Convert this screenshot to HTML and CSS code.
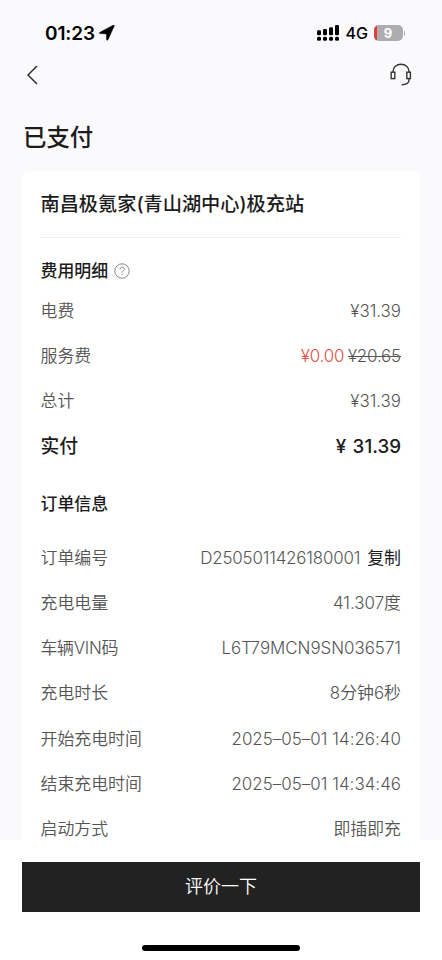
FILE: index.html
```html
<!DOCTYPE html>
<html lang="zh-CN">
<head>
<meta charset="utf-8">
<meta name="viewport" content="width=device-width, initial-scale=1">
<title>已支付</title>
<link rel="stylesheet" href="styles.css">
</head>
<body>
<div class="screen">
  <header class="status">
    <span class="clock">01:23</span>
    <svg class="location" width="16" height="16" viewBox="0 0 16 16"><path d="M15.2 1.1 8.9 14.9c-.3.6-1.3.5-1.3-.3L7.4 8.9 1.2 8.6c-.9 0-1-1-.2-1.4L14.2.2c.7-.3 1.3.2 1 .9Z" stroke="#000" stroke-width=".5"/></svg>
    <svg class="signal" width="23" height="16" viewBox="0 0 23 16">
      <rect x="0" y="5.2" width="4" height="5" rx="1.3"/><rect x="6" y="4" width="4" height="6.2" rx="1.3"/><rect x="12" y="2.2" width="4" height="8" rx="1.3"/><rect x="18" y="0" width="4" height="10.2" rx="1.3"/>
      <rect x="0" y="11.7" width="4" height="4" rx="1.5"/><rect x="6" y="11.7" width="4" height="4" rx="1.5"/><rect x="12" y="11.7" width="4" height="4" rx="1.5"/><rect x="18" y="11.7" width="4" height="4" rx="1.5"/>
    </svg>
    <span class="network">4G</span>
    <span class="battery"><span class="level">9</span></span><span class="battery-tip"></span>
  </header>
  <nav class="nav">
    <svg width="12" height="20" viewBox="0 0 12 20" fill="none" stroke="#222" stroke-width="1.4"><path d="M10 1 1 10l9 9"/></svg>
    <svg width="22" height="24" viewBox="0 0 22 24" fill="none" stroke="#333" stroke-width="1.4"><path d="M3 9V8.5a8 7.3 0 0 1 16 0V9M19 16v.8c0 3-2.8 5-7.3 5"/><rect x="1.2" y="9.2" width="3.6" height="6.4"/><rect x="16.8" y="9.2" width="3.6" height="6.4"/></svg>
  </nav>
  <h1 class="title">已支付</h1>
  <main class="card">
    <h2 class="station">南昌极氪家(青山湖中心)极充站</h2>
    <h3 class="section fees">费用明细<svg width="16" height="16" viewBox="0 0 16 16" fill="none" stroke="#888" stroke-width="1"><circle cx="8" cy="8" r="7.2"/><path d="M5.9 6.5c0-3.2 4.4-2.9 4.4-.3 0 1.7-2.2 1.7-2.2 3.6M8.1 11v1.2"/></svg></h3>
    <dl class="rows">
      <div class="row"><dt>电费</dt><dd class="price">¥31.39</dd></div>
      <div class="row"><dt>服务费</dt><dd class="price reduced"><span class="discount">¥0.00</span> <s>¥20.65</s></dd></div>
      <div class="row"><dt>总计</dt><dd class="price">¥31.39</dd></div>
      <div class="row paid"><dt>实付</dt><dd>¥ 31.39</dd></div>
    </dl>
    <h3 class="section order">订单信息</h3>
    <dl class="rows">
      <div class="row"><dt>订单编号</dt><dd class="number">D2505011426180001<span class="copy">复制</span></dd></div>
      <div class="row"><dt>充电电量</dt><dd>41.307度</dd></div>
      <div class="row"><dt class="vin">车辆VIN码</dt><dd>L6T79MCN9SN036571</dd></div>
      <div class="row"><dt>充电时长</dt><dd>8分钟6秒</dd></div>
      <div class="row"><dt>开始充电时间</dt><dd class="date">2025–05–01 14:26:40</dd></div>
      <div class="row"><dt>结束充电时间</dt><dd class="date">2025–05–01 14:34:46</dd></div>
      <div class="row"><dt>启动方式</dt><dd>即插即充</dd></div>
    </dl>
  </main>
  <footer class="footer">
    <button class="review">评价一下</button>
    <div class="home"></div>
  </footer>
</div>
</body>
</html>
```
FILE: styles.css
```css
* { box-sizing: border-box; margin: 0; padding: 0; }
body { background: #fafafc; font-family: Inter, "Noto Sans CJK SC", sans-serif; color: #1c1c1c; }
.screen { width: 442px; height: 960px; overflow: hidden; display: flex; flex-direction: column; }
.status { height: 50px; flex: none; padding: 16px 37px 0 45px; display: flex; align-items: center; color: #000; }
.clock { font-size: 19px; font-weight: 560; letter-spacing: -0.1px; }
.location { margin-left: 4px; }
.signal { margin-left: auto; }
.network { font-size: 16px; font-weight: 450; margin-left: 6px; width: 28px; }
.battery { width: 29px; height: 16px; border-radius: 5px; background: linear-gradient(90deg, #e33b3b 3px, #adadb0 3px); display: flex; align-items: center; justify-content: center; }
.level { color: #fff; font-size: 13px; font-weight: 700; line-height: 16px; }
.battery-tip { width: 1.5px; height: 5px; margin-left: 1px; border-radius: 0 2px 2px 0; background: #adadb0; }
.nav { height: 50px; flex: none; padding: 0 30px 0 27px; display: flex; align-items: center; justify-content: space-between; }
.title { flex: none; height: 71px; padding-left: 23px; font-size: 23.4px; font-weight: 500; line-height: 76px; }
.card { flex: 1; min-height: 0; overflow: hidden; margin: 0 22px; padding: 0 19px 0 18.5px; background: #fff; border-radius: 8px 8px 0 0; }
.station { height: 67px; line-height: 66px; font-size: 19.2px; font-weight: 500; border-bottom: 1px solid #eee; white-space: nowrap; }
.section { font-size: 16.9px; font-weight: 500; display: flex; align-items: center; }
.fees { height: 50.5px; padding-top: 13px; }
.fees svg { margin: 2px 0 0 6px; }
.order { height: 66px; padding-top: 1px; }
.row { height: 45.2px; display: flex; align-items: center; justify-content: space-between; white-space: nowrap; font-size: 16.9px; font-weight: 350; line-height: 24px; color: #555; }
.reduced { letter-spacing: -0.15px; word-spacing: -1px; }
.number { letter-spacing: -0.17px; }
.vin { letter-spacing: -0.3px; }
.date { letter-spacing: 0.04px; }
.discount { color: #e34d42; }
.copy { color: #1c1c1c; font-weight: 400; letter-spacing: 0; margin-left: 7px; }
.paid { font-size: 18.8px; font-weight: 500; color: #1c1c1c; padding-top: 1px; }
.paid dd { word-spacing: 1.5px; }
.footer { height: 120px; flex: none; background: #fff; padding: 22px 22px 0; }
.review { display: block; width: 100%; height: 50px; border: 0; background: #222; color: #fff; font: 350 18px/50px Inter, "Noto Sans CJK SC", sans-serif; }
.home { width: 158px; height: 6px; margin: 33px auto 0; border-radius: 3px; background: #000; }
```
